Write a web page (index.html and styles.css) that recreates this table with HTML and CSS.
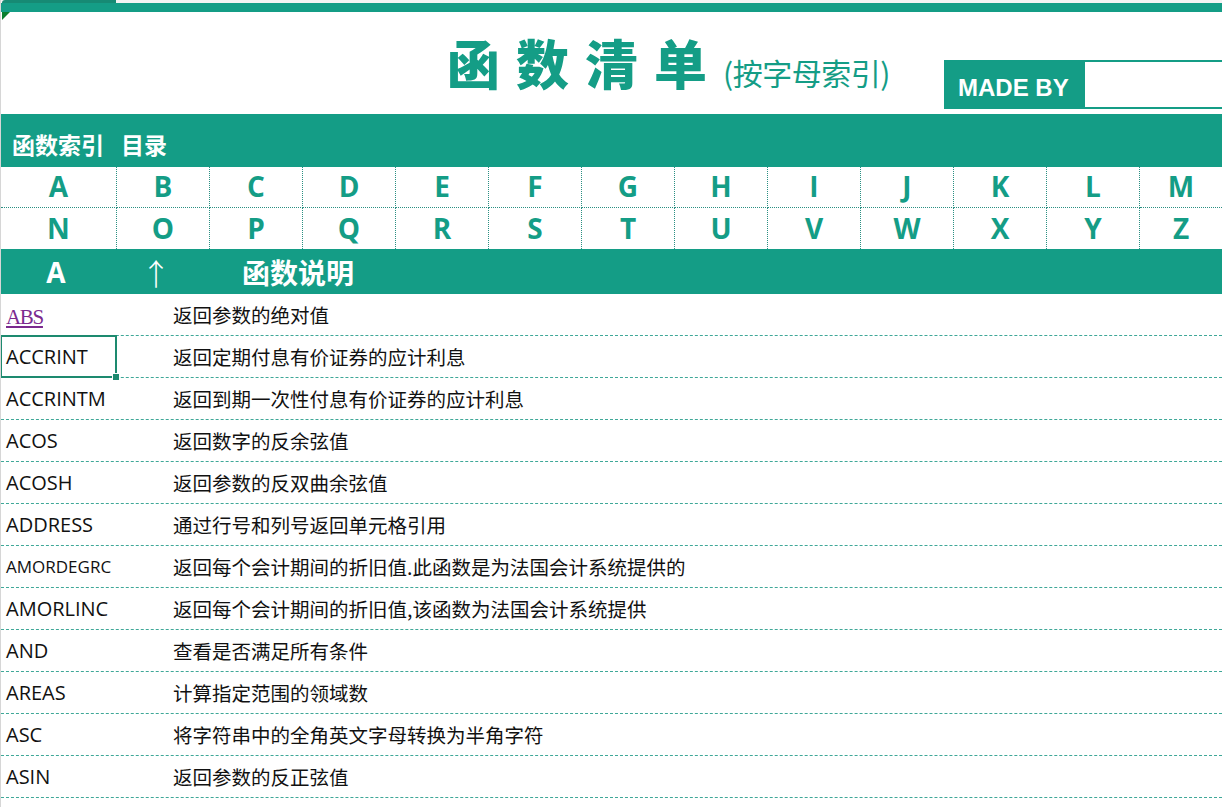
FILE: index.html
```html
<!DOCTYPE html>
<html lang="zh-CN">
<head>
<meta charset="utf-8">
<title>函数清单</title>
<link rel="stylesheet" href="styles.css">
</head>
<body>
<div class="page">
  <div class="colstrip"><span class="colsel"></span></div>
  <div class="topbar"></div>
  <div class="titlearea">
    <span class="corner"></span>
    <div class="titlegroup">
      <h1 class="title">函数清单</h1>
      <span class="subtitle">(按字母索引)</span>
    </div>
    <div class="madeby">
      <span class="madeby-label">MADE BY</span>
      <span class="madeby-box"></span>
    </div>
  </div>
  <div class="sectionbar"><span>函数索引</span><span class="gapword">目录</span></div>
  <div class="letters">
    <span class="lt">A</span><span class="lt">B</span><span class="lt">C</span><span class="lt">D</span><span class="lt">E</span><span class="lt">F</span><span class="lt">G</span><span class="lt">H</span><span class="lt">I</span><span class="lt">J</span><span class="lt">K</span><span class="lt">L</span><span class="lt last">M</span>
    <span class="lt r2">N</span><span class="lt r2">O</span><span class="lt r2">P</span><span class="lt r2">Q</span><span class="lt r2">R</span><span class="lt r2">S</span><span class="lt r2">T</span><span class="lt r2">U</span><span class="lt r2">V</span><span class="lt r2">W</span><span class="lt r2">X</span><span class="lt r2">Y</span><span class="lt r2 last">Z</span>
  </div>
  <div class="headbar">
    <span class="hb-letter">A</span>
    <span class="hb-arrow">↑</span>
    <span class="hb-title">函数说明</span>
  </div>
  <div class="rows">
    <div class="row"><a class="name link" href="#">ABS</a><span class="desc">返回参数的绝对值</span></div>
    <div class="row"><span class="name selected">ACCRINT<i class="handle"></i></span><span class="desc">返回定期付息有价证券的应计利息</span></div>
    <div class="row"><span class="name">ACCRINTM</span><span class="desc">返回到期一次性付息有价证券的应计利息</span></div>
    <div class="row"><span class="name">ACOS</span><span class="desc">返回数字的反余弦值</span></div>
    <div class="row"><span class="name">ACOSH</span><span class="desc">返回参数的反双曲余弦值</span></div>
    <div class="row"><span class="name">ADDRESS</span><span class="desc">通过行号和列号返回单元格引用</span></div>
    <div class="row"><span class="name small">AMORDEGRC</span><span class="desc">返回每个会计期间的折旧值.此函数是为法国会计系统提供的</span></div>
    <div class="row"><span class="name">AMORLINC</span><span class="desc">返回每个会计期间的折旧值,该函数为法国会计系统提供</span></div>
    <div class="row"><span class="name">AND</span><span class="desc">查看是否满足所有条件</span></div>
    <div class="row"><span class="name">AREAS</span><span class="desc">计算指定范围的领域数</span></div>
    <div class="row"><span class="name">ASC</span><span class="desc">将字符串中的全角英文字母转换为半角字符</span></div>
    <div class="row"><span class="name">ASIN</span><span class="desc">返回参数的反正弦值</span></div>
  </div>
</div>
</body>
</html>
```

FILE: styles.css
```css
* { box-sizing: border-box; }
html, body { margin: 0; padding: 0; background: #ffffff; }
body { overflow: hidden; }

.page {
  width: 1222px;
  height: 807px;
  border-left: 1px solid #d6d6d6;
  background: #ffffff;
  font-family: "Open Sans", "Noto Sans CJK SC", sans-serif;
  color: #111111;
  overflow: hidden;
}

.colstrip {
  height: 3px;
  background: #f3f3f3;
  display: flex;
}
.colsel {
  width: 114px;
  height: 3px;
  margin-left: 1px;
  background: #168a74;
  border-radius: 3px 0 0 0;
}

.topbar {
  height: 9px;
  background: #149d86;
}

.titlearea {
  position: relative;
  height: 102px;
  display: flex;
  align-items: flex-end;
  padding-bottom: 5px;
}
.corner {
  position: absolute;
  left: 1px;
  top: 0;
  width: 0;
  height: 0;
  border-top: 8px solid #0a7f2e;
  border-right: 8px solid transparent;
}
.titlegroup {
  display: flex;
  align-items: baseline;
  margin-left: 446px;
  align-self: flex-start;
  margin-top: 21px;
}
.title {
  margin: 0;
  font-family: "Noto Sans CJK SC", sans-serif;
  font-weight: 900;
  font-size: 53px;
  line-height: 58px;
  letter-spacing: 16px;
  color: #149d86;
}
.subtitle {
  font-family: "Noto Sans CJK SC", sans-serif;
  font-size: 30px;
  color: #149d86;
  margin-left: 0;
  letter-spacing: -0.5px;
}
.madeby {
  margin-left: auto;
  width: 278px;
  height: 49px;
  display: flex;
}
.madeby-label {
  width: 141px;
  background: #149d86;
  color: #ffffff;
  font-family: "Liberation Sans", Arial, sans-serif;
  font-weight: 700;
  font-size: 24px;
  display: flex;
  align-items: center;
  padding-left: 14px;
  padding-top: 6px;
}
.madeby-box {
  flex: 1;
  border: 2px solid #149d86;
  border-left: none;
  border-right: none;
}

.sectionbar {
  height: 53px;
  background: #149d86;
  color: #ffffff;
  font-family: "Noto Sans CJK SC", sans-serif;
  font-weight: 700;
  font-size: 23px;
  display: flex;
  align-items: center;
  padding-left: 11px;
  padding-top: 7px;
}
.gapword { margin-left: 17px; }

.letters {
  display: grid;
  grid-template-columns: 116px repeat(11, 93px) 1fr;
  grid-template-rows: 41px 41px;
}
.lt {
  display: flex;
  align-items: center;
  justify-content: center;
  border-right: 1px dotted #2a8f82;
  border-bottom: 1px dotted #2a8f82;
  color: #149d86;
  font-family: "Open Sans", sans-serif;
  font-weight: 700;
  font-size: 28px;
  line-height: 1;
  padding-bottom: 2px;
}
.lt.r2 { border-bottom: none; }
.lt.last { border-right: none; }

.headbar {
  height: 45px;
  background: #149d86;
  color: #ffffff;
  display: flex;
  align-items: center;
}
.hb-letter {
  width: 110px;
  text-align: center;
  font-family: "Open Sans", sans-serif;
  font-weight: 700;
  font-size: 28px;
}
.hb-arrow {
  width: 90px;
  text-align: center;
  font-family: "Noto Sans CJK SC", sans-serif;
  font-weight: 300;
  font-size: 30px;
  line-height: 1;
}
.hb-title {
  margin-left: 41px;
  font-family: "Noto Sans CJK SC", sans-serif;
  font-weight: 700;
  font-size: 28px;
}

.row {
  display: grid;
  grid-template-columns: 167px 1fr;
  height: 42px;
  border-bottom: 1px dashed #3fa898;
}
.name {
  display: flex;
  align-items: center;
  padding-left: 5px;
  padding-bottom: 1px;
  font-family: "Open Sans", sans-serif;
  font-size: 20px;
  color: #111111;
  position: relative;
}
.name.small { font-size: 17px; }
.name.link {
  font-family: "Liberation Serif", serif;
  font-size: 21px;
  letter-spacing: -1.3px;
  color: #7b2a8f;
  text-decoration: underline;
  text-underline-offset: 2px;
  padding-top: 6px;
}
.name.selected {
  width: 117px;
  margin-top: -1px;
  margin-bottom: -1px;
  border: 2px solid #1d8a6f;
  margin-left: -1px;
  padding-left: 4px;
}
.handle {
  position: absolute;
  right: -5px;
  bottom: -5px;
  width: 8px;
  height: 8px;
  background: #1d8a6f;
  border: 1px solid #ffffff;
}
.desc {
  display: flex;
  align-items: center;
  padding-left: 5px;
  padding-bottom: 1px;
  font-family: "Noto Sans CJK SC", sans-serif;
  font-size: 19.5px;
  color: #111111;
}
```
